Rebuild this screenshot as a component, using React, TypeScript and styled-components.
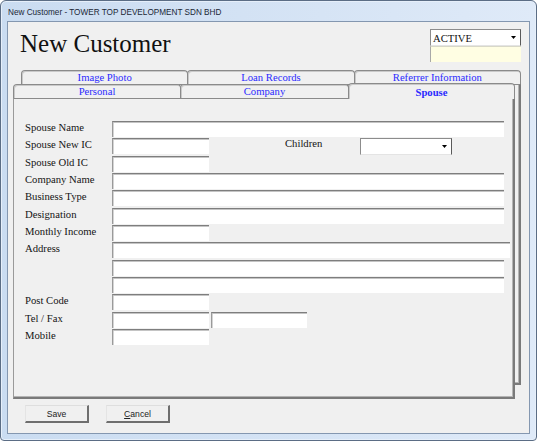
import React from "react";
import styled, { createGlobalStyle } from "styled-components";

const Global = createGlobalStyle`
  html, body { margin: 0; padding: 0; background: #ffffff; }
  body { width: 537px; height: 441px; overflow: hidden; }
  * { box-sizing: border-box; }
`;

const Window = styled.div`
  width: 537px;
  height: 441px;
  display: flex;
  flex-direction: column;
  border: 1px solid #5b6d85;
  border-radius: 6px 6px 4px 4px;
  background: linear-gradient(90deg, #cadcf1 0%, #d6e4f5 60%, #dfeaf8 100%);
  box-shadow: inset 0 0 0 1px #e6effa;
  padding: 0 6px 6px 6px;
`;

const TitleBar = styled.div`
  flex: none;
  height: 20px;
  padding: 7px 0 0 1px;
  font-family: "Liberation Sans", Arial, sans-serif;
  font-size: 8.2px;
  line-height: 10px;
  color: #1b2736;
  white-space: nowrap;
`;

const Client = styled.div`
  flex: 1;
  display: flex;
  flex-direction: column;
  background: #f0f0f0;
  border: 1px solid #8497b0;
`;

const Header = styled.div`
  flex: none;
  height: 41px;
  display: flex;
  justify-content: space-between;
  align-items: flex-start;
  padding: 7px 8px 0 12px;
`;

const Heading = styled.h1`
  margin: 2px 0 0 0;
  font-family: "Liberation Serif", "Times New Roman", serif;
  font-weight: 400;
  font-size: 25px;
  line-height: 25px;
  color: #111111;
`;

const StatusBox = styled.div`
  width: 91px;
  display: flex;
  flex-direction: column;
`;

const Combo = styled.div<{ $w: number }>`
  width: ${(p) => p.$w}px;
  height: 17px;
  flex: none;
  display: flex;
  align-items: center;
  justify-content: space-between;
  padding: 0 4px 0 2px;
  background: #ffffff;
  border-top: 1px solid #8c8c8c;
  border-left: 1px solid #8c8c8c;
  border-right: 1px solid #5a5a5a;
  border-bottom: 1px solid #e4e4e4;
  font-family: "Liberation Serif", "Times New Roman", serif;
  font-size: 10.67px;
  color: #111111;
`;

const Note = styled.div`
  height: 16px;
  background: #fffee3;
  border-left: 1px solid #a8a8a8;
  border-top: 1px solid #d8d8c8;
`;

const TabStack = styled.div`
  flex: none;
  height: 329px;
  margin: 7px 8px 0 5px;
  display: grid;
`;

const BackSheet = styled.div`
  grid-area: 1 / 1;
  margin: 0 0 14px 8px;
  display: flex;
  flex-direction: column;
`;

const FrontSheet = styled.div`
  grid-area: 1 / 1;
  margin: 14px 6px 0 0;
  display: flex;
  flex-direction: column;
  position: relative;
`;

const TabRow = styled.div`
  flex: none;
  height: 14px;
  display: flex;
  align-items: flex-end;
`;

const Tab = styled.div<{ $active?: boolean; $w?: number }>`
  flex: ${(p) => (p.$w ? `0 0 ${p.$w}px` : "1 1 0")};
  height: ${(p) => (p.$active ? 16 : 14)}px;
  margin-bottom: ${(p) => (p.$active ? -1 : 0)}px;
  padding-top: ${(p) => (p.$active ? 2 : 0)}px;
  border: 1px solid #8a8a8a;
  border-bottom: none;
  border-radius: 4px 4px 0 0;
  background: #f0f0f0;
  box-shadow: inset 1px 1px 0 #c9c9c9;
  text-align: center;
  font-family: "Liberation Serif", "Times New Roman", serif;
  font-weight: ${(p) => (p.$active ? 700 : 400)};
  font-size: 10.67px;
  line-height: 12px;
  color: #2a2aff;
  position: relative;
  z-index: ${(p) => (p.$active ? 2 : 1)};
  & + & { margin-left: -1px; }
`;

const SheetBody = styled.div`
  flex: 1;
  background: #f0f0f0;
  border-top: 1px solid #8a8a8a;
  border-left: 1px solid #9a9a9a;
  border-right: 2px solid #7a7a7a;
  border-bottom: 2px solid #7a7a7a;
  box-shadow: inset -1px -1px 0 #b4b4b4;
`;

const FormBody = styled(SheetBody)`
  padding: 22px 0 0 11px;
`;

const Row = styled.div`
  height: 17.33px;
  display: flex;
  align-items: flex-start;
`;

const Label = styled.div<{ $w?: number; $ml?: number; $dy?: number }>`
  flex: none;
  width: ${(p) => p.$w ?? 87}px;
  margin-left: ${(p) => p.$ml ?? 0}px;
  margin-top: ${(p) => p.$dy ?? 0}px;
  font-family: "Liberation Serif", "Times New Roman", serif;
  font-size: 10.67px;
  line-height: 13px;
  color: #141414;
  white-space: nowrap;
`;

const Field = styled.input<{ $w: number; $ml?: number }>`
  flex: none;
  width: ${(p) => p.$w}px;
  height: 16px;
  margin: 0 0 0 ${(p) => p.$ml ?? 0}px;
  padding: 0 2px;
  background: #ffffff;
  border: none;
  border-top: 1px solid #7e7e7e;
  border-left: 1px solid #9a9a9a;
  box-shadow: inset 0 1px 0 #c4c4c4, inset 1px 0 0 #d4d4d4;
  outline: none;
  font-family: "Liberation Serif", serif;
  font-size: 10.67px;
`;

const ButtonBar = styled.div`
  flex: none;
  display: flex;
  gap: 17px;
  padding: 6px 0 0 17px;
`;

const Button = styled.button`
  width: 64px;
  height: 18px;
  padding: 0;
  background: #f0f0f0;
  border-top: 1px solid #dedede;
  border-left: 1px solid #e4e4e4;
  border-right: 2px solid #6e6e6e;
  border-bottom: 2px solid #6e6e6e;
  font-family: "Liberation Sans", Arial, sans-serif;
  font-size: 8.6px;
  color: #222222;
  line-height: 14px;
  & u { text-decoration: underline; }
`;

const Arrow = () => (
  <svg width="5" height="3" viewBox="0 0 5 3">
    <path d="M0 0h5L2.5 3z" fill="#000" />
  </svg>
);

export default function App() {
  return (
    <>
      <Global />
      <Window>
        <TitleBar>New Customer - TOWER TOP DEVELOPMENT SDN BHD</TitleBar>
        <Client>
          <Header>
            <Heading>New Customer</Heading>
            <StatusBox>
              <Combo $w={91}>
                <span>ACTIVE</span>
                <Arrow />
              </Combo>
              <Note />
            </StatusBox>
          </Header>
          <TabStack>
            <BackSheet>
              <TabRow>
                <Tab>Image Photo</Tab>
                <Tab>Loan Records</Tab>
                <Tab>Referrer Information</Tab>
              </TabRow>
              <SheetBody />
            </BackSheet>
            <FrontSheet>
              <TabRow>
                <Tab $w={168}>Personal</Tab>
                <Tab $w={169}>Company</Tab>
                <Tab $active>Spouse</Tab>
              </TabRow>
              <FormBody>
                <Row>
                  <Label>Spouse Name</Label>
                  <Field $w={392} readOnly />
                </Row>
                <Row>
                  <Label>Spouse New IC</Label>
                  <Field $w={97} readOnly />
                  <Label $w={75} $ml={76} $dy={-1}>Children</Label>
                  <Combo $w={92}>
                    <span />
                    <Arrow />
                  </Combo>
                </Row>
                <Row>
                  <Label>Spouse Old IC</Label>
                  <Field $w={97} readOnly />
                </Row>
                <Row>
                  <Label>Company Name</Label>
                  <Field $w={392} readOnly />
                </Row>
                <Row>
                  <Label>Business Type</Label>
                  <Field $w={392} readOnly />
                </Row>
                <Row>
                  <Label>Designation</Label>
                  <Field $w={392} readOnly />
                </Row>
                <Row>
                  <Label>Monthly Income</Label>
                  <Field $w={97} readOnly />
                </Row>
                <Row>
                  <Label>Address</Label>
                  <Field $w={398} readOnly />
                </Row>
                <Row>
                  <Label />
                  <Field $w={392} readOnly />
                </Row>
                <Row>
                  <Label />
                  <Field $w={392} readOnly />
                </Row>
                <Row>
                  <Label>Post Code</Label>
                  <Field $w={97} readOnly />
                </Row>
                <Row>
                  <Label>Tel / Fax</Label>
                  <Field $w={97} readOnly />
                  <Field $w={96} $ml={2} readOnly />
                </Row>
                <Row>
                  <Label>Mobile</Label>
                  <Field $w={97} readOnly />
                </Row>
              </FormBody>
            </FrontSheet>
          </TabStack>
          <ButtonBar>
            <Button>Save</Button>
            <Button>
              <u>C</u>ancel
            </Button>
          </ButtonBar>
        </Client>
      </Window>
    </>
  );
}
